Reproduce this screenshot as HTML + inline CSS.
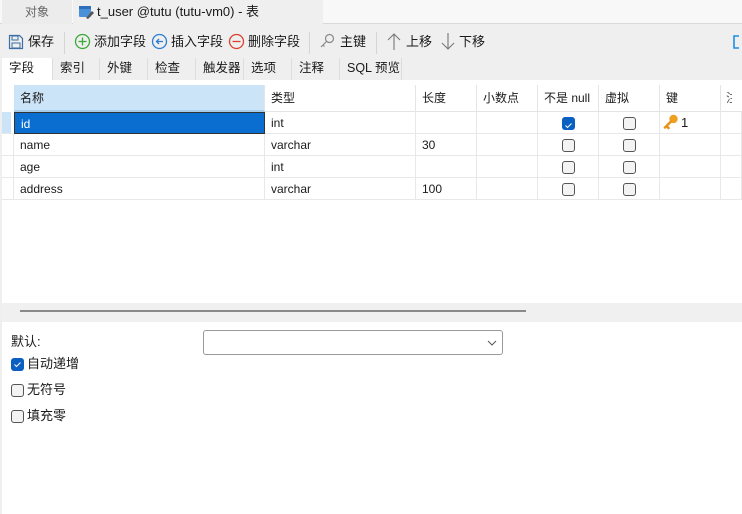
<!DOCTYPE html>
<html><head><meta charset="utf-8">
<style>
*{box-sizing:border-box;margin:0;padding:0}
body{width:742px;height:514px;overflow:hidden;background:#efefef;font-family:"Liberation Sans","Noto Sans CJK SC",sans-serif;font-size:12px;color:#1a1a1a;position:relative}
.abs{position:absolute}
.top{left:0;top:0;width:742px;height:24px;background:#f8f8f8;border-bottom:1px solid #d8d8d8}
.t1{left:2px;top:0;width:70px;height:24px;background:#ececec;color:#666;text-align:center;line-height:24px}
.t2{left:73px;top:0;width:250px;height:25px;background:#efefef;line-height:24px;padding-left:24px;font-size:13px}
.tb{top:30px;height:24px;line-height:24px;font-size:13px}
.sep{top:32px;width:1px;height:22px;background:#d5d5d5}
.st{top:58px;height:22px;line-height:20px;border-right:1px solid #dcdcdc;padding-left:7px;font-size:12.5px}
.grid{left:2px;top:80px;width:740px;height:223px;background:#fff}
.hd{top:85px;height:27px;line-height:27px;border-right:1px solid #e4e4e4;border-bottom:1px solid #e4e4e4;padding-left:6px;background:#fff}
.cell{height:22px;line-height:22px;border-right:1px solid #e8e8e8;border-bottom:1px solid #e8e8e8;padding-left:6px}
.cb{width:13px;height:13px;border:1px solid #555;border-radius:3px;background:#f3f3f3}
.cbc{width:13px;height:13px;border-radius:3px;background:#0a5fc2}
.bottom{left:2px;top:322px;width:740px;height:192px;background:#fff}
.lb{font-size:13px;line-height:16px}
</style></head><body>
<div class="abs top"></div>
<div class="abs t1">对象</div>
<div class="abs t2">t_user @tutu (tutu-vm0) - 表</div>
<svg class="abs" style="left:78px;top:5px" width="16" height="15"><rect x="1" y="1" width="12" height="11" rx="1" fill="#4a90d9"/><rect x="1" y="1" width="12" height="3" fill="#2d6fb8"/><path d="M8 13 L14 6 L16 8 L10 14Z" fill="#555"/></svg>

<svg class="abs" style="left:8px;top:34px" width="16" height="16"><path d="M1.5 1.5h10l3 3v10h-13z" fill="none" stroke="#3a6ea5" stroke-width="1.2"/><rect x="4" y="2" width="6" height="4" fill="none" stroke="#3a6ea5"/><rect x="4" y="9" width="8" height="5" fill="none" stroke="#3a6ea5"/></svg>
<div class="abs tb" style="left:28px">保存</div>
<div class="abs sep" style="left:64px"></div>
<svg class="abs" style="left:74px;top:33px" width="17" height="17"><circle cx="8.5" cy="8.5" r="7" fill="none" stroke="#3aa935" stroke-width="1.3"/><path d="M8.5 4.5v8M4.5 8.5h8" stroke="#3aa935" stroke-width="1.3"/></svg>
<div class="abs tb" style="left:94px">添加字段</div>
<svg class="abs" style="left:151px;top:33px" width="17" height="17"><circle cx="8.5" cy="8.5" r="7" fill="none" stroke="#2a7ed3" stroke-width="1.3"/><path d="M12 8.5H5.5M8 6L5.5 8.5 8 11" fill="none" stroke="#2a7ed3" stroke-width="1.3"/></svg>
<div class="abs tb" style="left:171px">插入字段</div>
<svg class="abs" style="left:228px;top:33px" width="17" height="17"><circle cx="8.5" cy="8.5" r="7" fill="none" stroke="#d9412f" stroke-width="1.3"/><path d="M4.5 8.5h8" stroke="#d9412f" stroke-width="1.3"/></svg>
<div class="abs tb" style="left:248px">删除字段</div>
<div class="abs sep" style="left:309px"></div>
<svg class="abs" style="left:319px;top:33px" width="16" height="16"><circle cx="10.5" cy="5.5" r="4" fill="none" stroke="#888" stroke-width="1.2"/><path d="M7.5 8.5L2 14M4 12l1.5 1.5" stroke="#888" stroke-width="1.2"/></svg>
<div class="abs tb" style="left:340px">主键</div>
<div class="abs sep" style="left:376px"></div>
<svg class="abs" style="left:386px;top:32px" width="16" height="19"><path d="M8 18V2M2 8l6-6 6 6" fill="none" stroke="#777" stroke-width="1.1"/></svg>
<div class="abs tb" style="left:406px">上移</div>
<svg class="abs" style="left:440px;top:32px" width="16" height="19"><path d="M8 1v16M2 11l6 6 6-6" fill="none" stroke="#777" stroke-width="1.1"/></svg>
<div class="abs tb" style="left:459px">下移</div>
<svg class="abs" style="left:733px;top:35px" width="9" height="15"><path d="M6 1H1v12h5" fill="none" stroke="#1b8fe6" stroke-width="1.6"/></svg>

<div class="abs st" style="left:2px;width:51px;background:#fff;height:23px">字段</div>
<div class="abs st" style="left:53px;width:47px">索引</div>
<div class="abs st" style="left:100px;width:48px">外键</div>
<div class="abs st" style="left:148px;width:48px">检查</div>
<div class="abs st" style="left:196px;width:48px">触发器</div>
<div class="abs st" style="left:244px;width:48px">选项</div>
<div class="abs st" style="left:292px;width:48px">注释</div>
<div class="abs st" style="left:340px;width:62px">SQL 预览</div>

<div class="abs grid"></div>
<div class="abs hd" style="left:14px;width:251px;background:#cce4f7;border-bottom:2px solid #a9cde9">名称</div>
<div class="abs hd" style="left:265px;width:151px">类型</div>
<div class="abs hd" style="left:416px;width:61px">长度</div>
<div class="abs hd" style="left:477px;width:61px">小数点</div>
<div class="abs hd" style="left:538px;width:61px">不是 null</div>
<div class="abs hd" style="left:599px;width:61px">虚拟</div>
<div class="abs hd" style="left:660px;width:61px">键</div>
<div class="abs hd" style="left:721px;width:21px;color:#555;padding-left:5px;overflow:hidden;border-right:none"><span style="display:inline-block;width:6px;overflow:hidden">注</span></div>

<div class="abs" style="left:2px;top:112px;width:740px">
<div style="display:flex"><div class="cell" style="width:12px;padding:0;background:#cce4f7;border-right:3px solid #fff"></div><div class="cell" style="width:251px;background:#0a6dd0;color:#fff;border:1px solid #333">id</div><div class="cell" style="width:151px">int</div><div class="cell" style="width:61px"></div><div class="cell" style="width:61px"></div><div class="cell" style="width:61px;position:relative"><div class="cbc abs" style="left:24px;top:5px"><svg width="13" height="13"><path d="M3.5 6.5l2 2 4-4" fill="none" stroke="#fff" stroke-width="1"/></svg></div></div><div class="cell" style="width:61px;position:relative"><div class="cb abs" style="left:24px;top:5px"></div></div><div class="cell" style="width:61px;padding-left:3px;font-size:13px"><svg width="16" height="16" style="vertical-align:-3px;margin-right:2px"><circle cx="10.5" cy="5" r="4.2" fill="#f0a020"/><path d="M8 7.5L2 13.5M3.5 12l2 2" stroke="#e8951a" stroke-width="2.6" stroke-linecap="round"/></svg>1</div><div class="cell" style="width:21px"></div></div>
<div style="display:flex"><div class="cell" style="width:12px;padding:0"></div><div class="cell" style="width:251px">name</div><div class="cell" style="width:151px">varchar</div><div class="cell" style="width:61px">30</div><div class="cell" style="width:61px"></div><div class="cell" style="width:61px;position:relative"><div class="cb abs" style="left:24px;top:5px"></div></div><div class="cell" style="width:61px;position:relative"><div class="cb abs" style="left:24px;top:5px"></div></div><div class="cell" style="width:61px"></div><div class="cell" style="width:21px"></div></div>
<div style="display:flex"><div class="cell" style="width:12px;padding:0"></div><div class="cell" style="width:251px">age</div><div class="cell" style="width:151px">int</div><div class="cell" style="width:61px"></div><div class="cell" style="width:61px"></div><div class="cell" style="width:61px;position:relative"><div class="cb abs" style="left:24px;top:5px"></div></div><div class="cell" style="width:61px;position:relative"><div class="cb abs" style="left:24px;top:5px"></div></div><div class="cell" style="width:61px"></div><div class="cell" style="width:21px"></div></div>
<div style="display:flex"><div class="cell" style="width:12px;padding:0"></div><div class="cell" style="width:251px">address</div><div class="cell" style="width:151px">varchar</div><div class="cell" style="width:61px">100</div><div class="cell" style="width:61px"></div><div class="cell" style="width:61px;position:relative"><div class="cb abs" style="left:24px;top:5px"></div></div><div class="cell" style="width:61px;position:relative"><div class="cb abs" style="left:24px;top:5px"></div></div><div class="cell" style="width:61px"></div><div class="cell" style="width:21px"></div></div>
</div>

<div class="abs" style="left:2px;top:303px;width:740px;height:19px;background:#f0f0f0"></div>
<div class="abs" style="left:20px;top:310px;width:506px;height:2px;background:#8a8a8a"></div>

<div class="abs bottom"></div>
<div class="abs lb" style="left:11px;top:334px">默认:</div>
<div class="abs" style="left:203px;top:330px;width:300px;height:25px;border:1px solid #999;border-radius:3px;background:#fff"><svg class="abs" style="right:5px;top:8px" width="10" height="8"><path d="M1 2l4 4 4-4" fill="none" stroke="#555"/></svg></div>
<div class="abs cbc" style="left:11px;top:358px"><svg width="13" height="13"><path d="M3.5 6.5l2 2 4-4" fill="none" stroke="#fff" stroke-width="1"/></svg></div>
<div class="abs lb" style="left:27px;top:356px">自动递增</div>
<div class="abs cb" style="left:11px;top:384px"></div>
<div class="abs lb" style="left:27px;top:382px">无符号</div>
<div class="abs cb" style="left:11px;top:410px"></div>
<div class="abs lb" style="left:27px;top:408px">填充零</div>
</body></html>
